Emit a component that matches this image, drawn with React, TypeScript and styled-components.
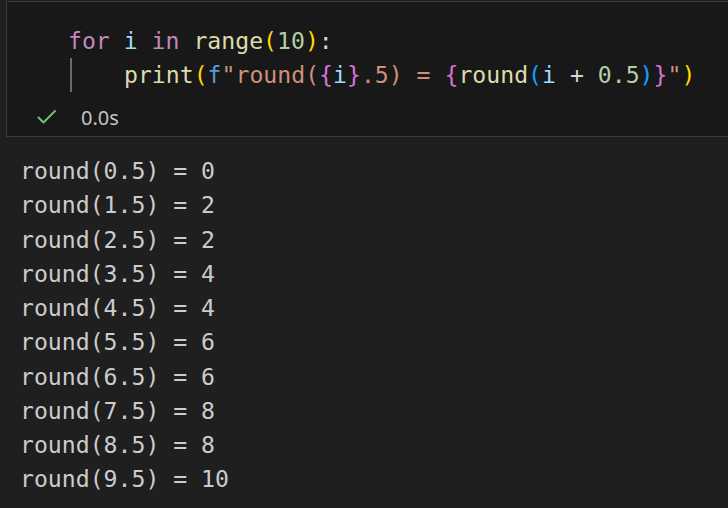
import React from "react";
import styled, { createGlobalStyle } from "styled-components";

const Global = createGlobalStyle`
  html, body { margin: 0; padding: 0; background: #1f1f1f; }
  body { overflow: hidden; width: 728px; height: 508px; }
`;

const Page = styled.div`
  display: flex;
  flex-direction: column;
  padding-top: 1px;
  padding-left: 6px;
`;

const Cell = styled.div`
  display: flex;
  flex-direction: column;
  background: #181818;
  border: 1px solid #3a3a3a;
  border-right: none;
  box-sizing: border-box;
  padding: 22px 0 0 61px;
  height: 136px;
`;

const Mono = `
  font-family: "DejaVu Sans Mono", "Liberation Mono", monospace;
  font-size: 23.15px;
  white-space: pre;
`;

const CodeLine = styled.div`
  ${Mono}
  line-height: 34px;
  display: flex;
  height: 34px;
  color: #d4d4d4;
`;

const Indent = styled.span`
  display: inline-block;
  margin-left: 2px;
  width: 54px;
  height: 34px;
  border-left: 2px solid #6b6b6b;
  box-sizing: border-box;
`;

const Tok = styled.span<{ $c: string }>`
  color: ${(p) => p.$c};
`;

const Status = styled.div`
  display: flex;
  align-items: center;
  gap: 24px;
  margin-left: -31px;
  margin-top: 11px;
  height: 28px;
  font-family: "Noto Sans", "Open Sans", sans-serif;
  font-size: 20px;
  color: #c4c4c4;
`;

const Output = styled.div`
  display: flex;
  flex-direction: column;
  padding: 17px 0 0 20px;
`;

const OutLine = styled.div`
  ${Mono}
  line-height: 34.25px;
  height: 34.25px;
  color: #cccccc;
`;

const C = {
  kw: "#c586c0",
  v: "#9cdcfe",
  fn: "#dcdcaa",
  b1: "#ffd700",
  b2: "#da70d6",
  b3: "#179fff",
  num: "#b5cea8",
  str: "#ce9178",
  f: "#569cd6",
  op: "#d4d4d4",
};

const CheckIcon = () => (
  <svg width="20" height="16" viewBox="0 0 20 16" fill="none">
    <path d="M1.5 8.5 L6.5 13.5 L18 2" stroke="#6cc270" strokeWidth="2" strokeLinecap="round" strokeLinejoin="round" />
  </svg>
);

const results = [0, 2, 2, 4, 4, 6, 6, 8, 8, 10];

export default function App() {
  return (
    <>
      <Global />
      <Page>
        <Cell>
          <CodeLine>
            <Tok $c={C.kw}>for</Tok>
            <Tok $c={C.op}> </Tok>
            <Tok $c={C.v}>i</Tok>
            <Tok $c={C.op}> </Tok>
            <Tok $c={C.kw}>in</Tok>
            <Tok $c={C.op}> </Tok>
            <Tok $c={C.fn}>range</Tok>
            <Tok $c={C.b1}>(</Tok>
            <Tok $c={C.num}>10</Tok>
            <Tok $c={C.b1}>)</Tok>
            <Tok $c={C.op}>:</Tok>
          </CodeLine>
          <CodeLine>
            <Indent />
            <Tok $c={C.fn}>print</Tok>
            <Tok $c={C.b1}>(</Tok>
            <Tok $c={C.f}>f</Tok>
            <Tok $c={C.str}>"round(</Tok>
            <Tok $c={C.b2}>{"{"}</Tok>
            <Tok $c={C.v}>i</Tok>
            <Tok $c={C.b2}>{"}"}</Tok>
            <Tok $c={C.str}>.5) = </Tok>
            <Tok $c={C.b2}>{"{"}</Tok>
            <Tok $c={C.fn}>round</Tok>
            <Tok $c={C.b3}>(</Tok>
            <Tok $c={C.v}>i</Tok>
            <Tok $c={C.op}> + </Tok>
            <Tok $c={C.num}>0.5</Tok>
            <Tok $c={C.b3}>)</Tok>
            <Tok $c={C.b2}>{"}"}</Tok>
            <Tok $c={C.str}>"</Tok>
            <Tok $c={C.b1}>)</Tok>
          </CodeLine>
          <Status>
            <CheckIcon />
            <span>0.0s</span>
          </Status>
        </Cell>
      </Page>
      <Output>
        {results.map((r, i) => (
          <OutLine key={i}>{`round(${i}.5) = ${r}`}</OutLine>
        ))}
      </Output>
    </>
  );
}
